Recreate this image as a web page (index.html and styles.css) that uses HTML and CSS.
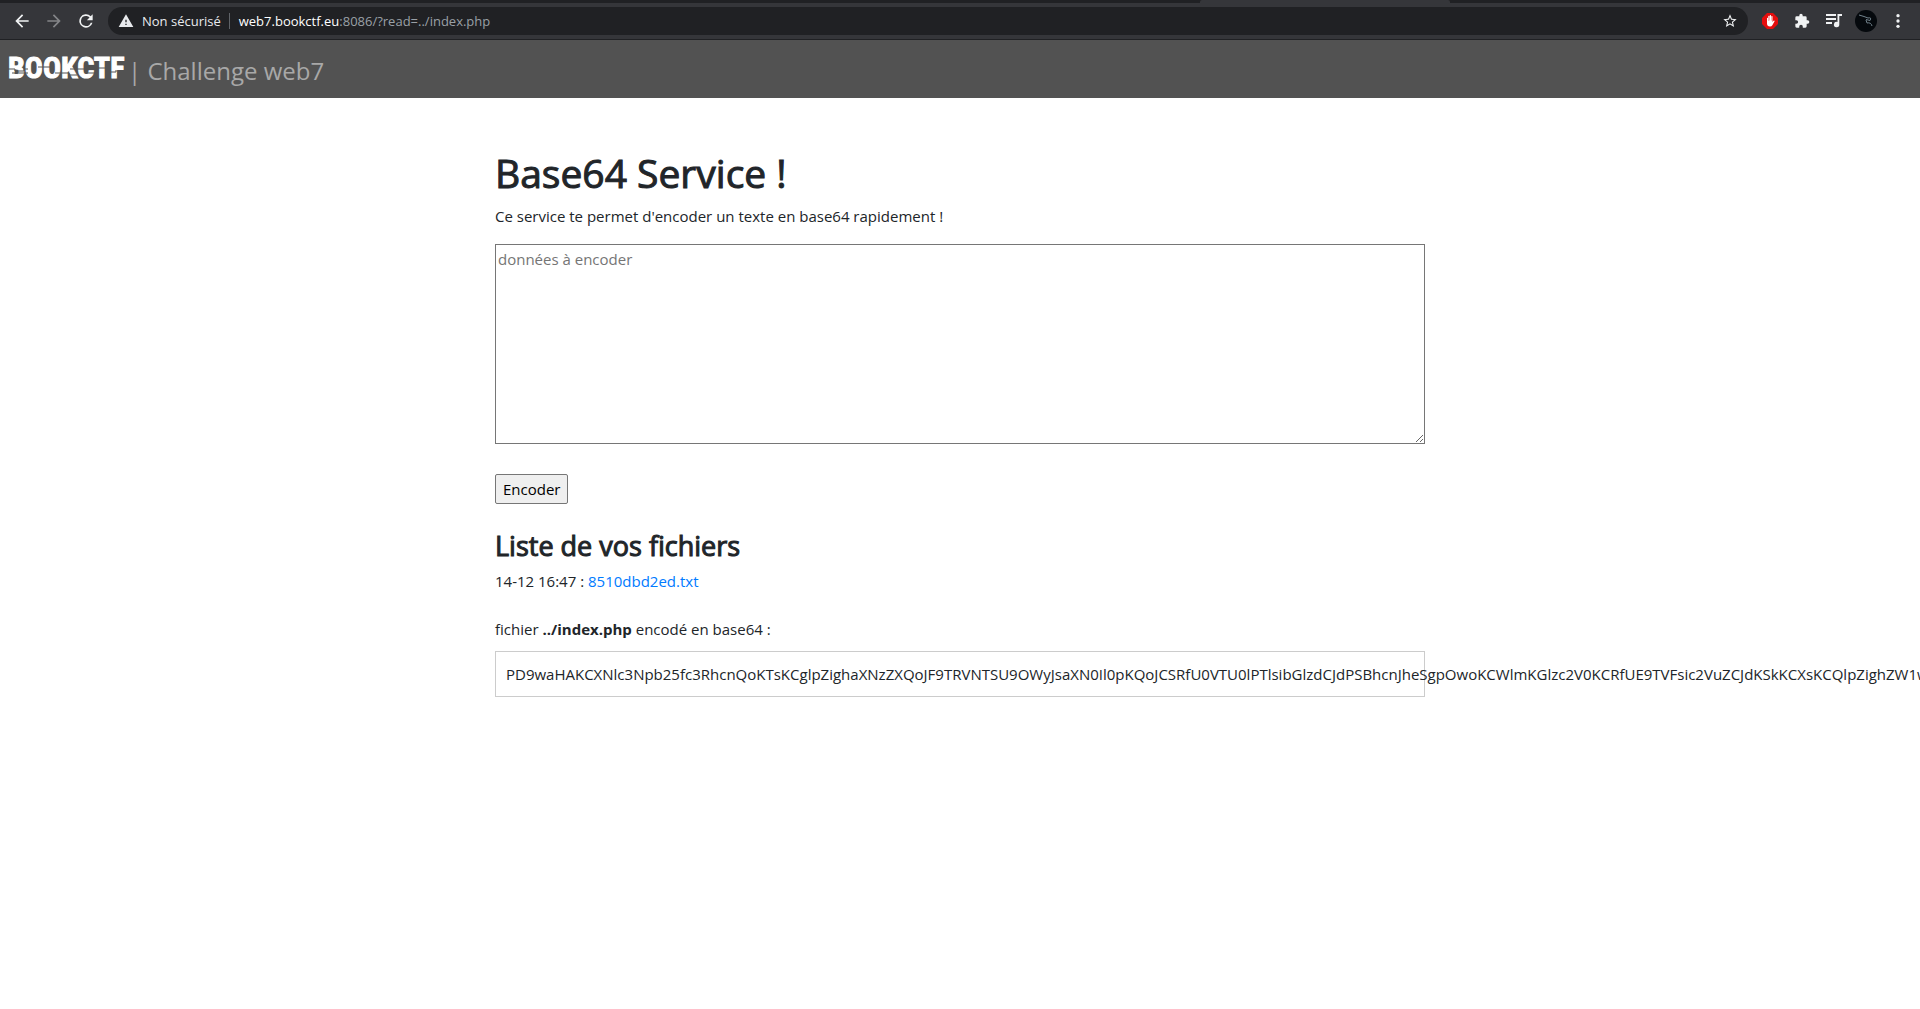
FILE: index.html
```
<!DOCTYPE html>
<html lang="fr">
<head>
<meta charset="utf-8">
<title>Base64 Service</title>
<link rel="stylesheet" href="styles.css">
</head>
<body>
<div class="browser">
  <div class="tabs"><span class="tab-active"></span></div>
  <div class="toolbar">
    <button class="tool" aria-label="Précédent"><svg viewBox="0 0 24 24"><path d="M20 11H7.8l5.6-5.6L12 4l-8 8 8 8 1.4-1.4L7.800 13H20z"/></svg></button>
    <button class="tool tool-off" aria-label="Suivant"><svg viewBox="0 0 24 24"><path d="M12 4l-1.400 1.400L16.200 11H4v2h12.200l-5.600 5.600L12 20l8-8z"/></svg></button>
    <button class="tool" aria-label="Actualiser"><svg viewBox="0 0 24 24"><path d="M17.650 6.350A8 8 0 1 0 19.730 14h-2.080A6 6 0 1 1 12 6c1.660 0 3.140.690 4.220 1.780L13 11h7V4z"/></svg></button>
    <div class="address">
      <svg class="warn" viewBox="0 0 24 24"><path d="M1 21h22L12 2zm12-3h-2v-2h2zm0-4h-2v-4h2z"/></svg>
      <span class="unsafe">Non sécurisé</span>
      <span class="url"><span class="host">web7.bookctf.eu</span>:8086/?read=../index.php</span>
      <button class="star" aria-label="Favori"><svg viewBox="0 0 24 24"><path d="M22 9.240l-7.190-.620L12 2 9.190 8.630 2 9.240l5.460 4.730L5.820 21 12 17.270 18.180 21l-1.630-7.030zM12 15.400l-3.760 2.270 1-4.280-3.320-2.880 4.380-.380L12 6.100l1.710 4.040 4.380.380-3.320 2.880 1 4.280z"/></svg></button>
    </div>
    <div class="extensions">
      <button class="ext" aria-label="Bloqueur"><svg viewBox="0 0 16 16"><path fill="#e40d0d" d="M5 0h6l5 5v6l-5 5H5l-5-5V5z"/><path fill="#fff" d="M5 5q.6-.6 1 0v3h.3V3q.6-.6 1.200 0v4.500h.3V2.300q.6-.6 1.200 0v5.200h.3V3.300q.6-.6 1.200 0V9l1-1.300q.8-.4 1.200.2L10.500 12Q9.700 13.500 8 13.500 5 13.500 5 10.500z"/></svg></button>
      <button class="ext" aria-label="Extensions"><svg viewBox="0 0 24 24"><path d="M20.500 11H19V7a2 2 0 0 0-2-2h-4V3.500a2.500 2.500 0 0 0-5 0V5H4a2 2 0 0 0-2 2v3.800h1.500a2.700 2.700 0 0 1 0 5.400H2V20a2 2 0 0 0 2 2h3.800v-1.500a2.700 2.700 0 0 1 5.400 0V22H17a2 2 0 0 0 2-2v-4h1.500a2.500 2.500 0 0 0 0-5z"/></svg></button>
      <button class="ext" aria-label="Médias"><svg viewBox="0 0 16 14"><path d="M0 0h10v2H0zM0 4h10v2H0zM0 8h6v2H0zM11.500 0H16v2h-2.700v8.500a2.700 2.700 0 1 1-1.800-2.500z"/></svg></button>
      <button class="ext avatar" aria-label="Profil"><svg viewBox="0 0 22 22"><circle cx="11" cy="11" r="11" fill="#05090d"/><path d="M4 5l5 1.500 4 1.500q4-1 2 2.500l-4-1M11 10l1 3q4-1 5 3" fill="none" stroke="#71828c"/></svg></button>
      <button class="ext" aria-label="Menu"><svg viewBox="0 0 24 24"><circle cx="12" cy="4" r="2.500"/><circle cx="12" cy="12" r="2.500"/><circle cx="12" cy="20" r="2.500"/></svg></button>
    </div>
  </div>
</div>
<header class="navbar">
  <a class="brand" href="#">BOOKCTF<svg class="glitch" viewBox="0 0 116 32"><path d="M0 17h7v2h9v-2h4M4 21h16M30 15h12M47 21h14v2h8M62 17h14M78 21h9v2M88 16h10M99 20h9v-2" fill="none" stroke="#525252"/></svg></a>
  <span class="challenge">| Challenge web7</span>
</header>
<main class="container">
  <h1>Base64 Service !</h1>
  <p class="intro"><label for="data">Ce service te permet d'encoder un texte en base64 rapidement !</label></p>
  <form>
    <textarea id="data" placeholder="données à encoder"></textarea>
    <button class="encode" type="button">Encoder</button>
  </form>
  <h3>Liste de vos fichiers</h3>
  <p class="file">14-12 16:47 : <a href="#">8510dbd2ed.txt</a></p>
  <p class="result-label">fichier <b>../index.php</b> encodé en base64 :</p>
  <div class="result">PD9waHAKCXNlc3Npb25fc3RhcnQoKTsKCglpZighaXNzZXQoJF9TRVNTSU9OWyJsaXN0Il0pKQoJCSRfU0VTU0lPTlsibGlzdCJdPSBhcnJheSgpOwoKCWlmKGlzc2V0KCRfUE9TVFsic2VuZCJdKSkKCXsKCQlpZighZW1wdHko</div>
</main>
</body>
</html>
```
FILE: styles.css
```
* { box-sizing: border-box; }
body {
  margin: 0;
  overflow-x: hidden;
  background: #fff;
  color: #212529;
  font: 15px/24px "Segoe UI", "Open Sans", "Noto Sans", sans-serif;
}
button { font: inherit; }
svg { display: block; fill: currentColor; }

/* Browser chrome */
.browser { background: #35363a; border-bottom: 1px solid #202124; }
.tabs { display: flex; height: 3px; background: #202124; }
.tab-active { width: 13%; margin-left: 62.500%; background: #35363a; border-radius: 2px 2px 0 0; }
.toolbar { display: flex; align-items: center; height: 36px; padding: 0 14px 0 12px; font-size: 13px; color: #e8eaed; }
.tool, .ext, .star { display: block; padding: 0; border: 0; background: none; color: #f1f3f4; }
.tool { width: 20px; margin-right: 12px; }
.tool-off { color: #848588; }
.address { display: flex; flex: 1; align-items: center; height: 28px; padding: 0 10px; border-radius: 14px; background: #202124; }
.warn { width: 16px; margin-right: 8px; }
.unsafe { padding-right: 8px; border-right: 1px solid #5f6368; line-height: 16px; }
.url { margin-left: 9px; color: #9aa0a6; }
.host { color: #fff; }
.star { width: 16px; margin-left: auto; }
.extensions { display: flex; align-items: center; gap: 16px; margin-left: 14px; }
.ext { width: 16px; }
.avatar { width: 22px; margin: 0 -3px; }

/* Page header */
.navbar { display: flex; align-items: center; height: 58px; padding: 0 8px; background: #525252; color: #a8a8a8; }
.brand { position: relative; width: 116px; margin-bottom: 2px; color: #fff; font: bold 30px/32px "Roboto Condensed", "Open Sans Condensed", "Liberation Sans Narrow", sans-serif; -webkit-text-stroke: 1px currentColor; text-decoration: none; }
.glitch { position: absolute; inset: 0; width: 100%; height: 100%; }
.challenge { padding-top: 4px; margin-left: 4px; font-size: 24px; }

/* Content */
.container { max-width: 960px; margin: 0 auto; padding: 51px 15px; }
h1, h3 { font-weight: 500; -webkit-text-stroke: 1px currentColor; }
h1 { margin: 0 0 7px; font-size: 39px; line-height: 48px; }
h3 { margin: 25px 0 6px; font-size: 27px; line-height: 34px; }
p { margin: 0; }
.intro { margin-bottom: 16px; }
textarea { display: block; width: 100%; height: 200px; padding: 2px; border: 1px solid #767676; font: inherit; }
textarea::placeholder { color: #757575; }
.encode { height: 30px; margin-top: 30px; padding: 0 7px; border: 1px solid #767676; border-radius: 2px; background: #efefef; color: #000; }
form { display: flex; flex-direction: column; align-items: flex-start; }
.file { margin-bottom: 24px; }
.file a { color: #007bff; text-decoration: none; }
.result-label { margin-bottom: 10px; }
.result { padding: 10px; border: 1px solid #ccc; white-space: nowrap; }
```
